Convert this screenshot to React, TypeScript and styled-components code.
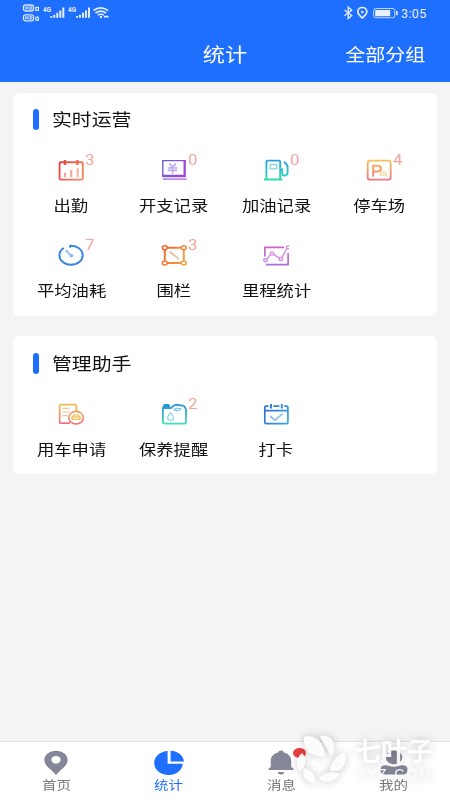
import React from 'react';
import styled, { createGlobalStyle } from 'styled-components';

const GlobalStyle = createGlobalStyle`
  * { box-sizing: border-box; }
  body { margin: 0; background: #f4f4f4; font-family: Roboto, 'Noto Sans CJK SC', sans-serif; }
  svg { display: block; overflow: visible; }
`;

const Screen = styled.div`
  position: relative;
  width: 450px;
  height: 800px;
  display: flex;
  flex-direction: column;
  background: #f4f4f4;
  overflow: hidden;
`;

const Top = styled.header`
  height: 82px;
  background: #1f6fff;
  color: #fff;
`;

const StatusBar = styled.div`
  height: 27px;
  display: flex;
  justify-content: space-between;
  padding: 0 23px 0 22px;
`;

const StatusRight = styled.div`
  display: flex;
`;

const Clock = styled.span`
  width: 26px;
  font-size: 12.5px;
  line-height: 27px;
  letter-spacing: 0.4px;
  color: #e4eeff;
`;

const TitleBar = styled.div`
  height: 54px;
  display: grid;
  grid-template-columns: 105px 240px 80px;
  justify-content: start;
  align-items: center;
  text-align: center;
`;

const Wide = styled.span<{ $size: number; $color?: string; $origin?: string }>`
  display: inline-block;
  white-space: nowrap;
  font-family: 'Noto Sans CJK SC', sans-serif;
  font-size: ${(p) => p.$size}px;
  line-height: 24px;
  color: ${(p) => p.$color ?? '#111'};
  transform: scaleX(1.169);
  transform-origin: ${(p) => p.$origin ?? 'center'};
`;

const Action = styled.div`
  display: flex;
  justify-content: center;
`;

const Main = styled.main`
  flex: 1;
  display: flex;
  flex-direction: column;
  gap: 20px;
  padding: 11px 13px 0;
`;

const Card = styled.section<{ $height: number; $head: number }>`
  height: ${(p) => p.$height}px;
  display: grid;
  grid-template-rows: ${(p) => p.$head}px 1fr;
  background: #fff;
  border-radius: 6px;
  padding: 0 7px;
`;

const CardHead = styled.div`
  padding-left: 13px;
  display: flex;
  align-items: center;
  gap: 13px;
`;

const Mark = styled.i`
  width: 6px;
  height: 21px;
  border-radius: 3px;
  background: #1f6fff;
`;

const Grid = styled.div<{ $top: number }>`
  display: grid;
  grid-template-columns: repeat(4, 102.5px);
  grid-auto-rows: 85px;
  padding-top: ${(p) => p.$top}px;
`;

const Cell = styled.div`
  display: flex;
  flex-direction: column;
  align-items: center;
  gap: 9px;
`;

const IconWrap = styled.div`
  position: relative;
  width: 30px;
  height: 28px;
`;

const Count = styled.span`
  position: absolute;
  left: 29px;
  top: -5px;
  font-family: Roboto, sans-serif;
  font-weight: 400;
  font-size: 14.6px;
  line-height: 19px;
  color: #f5a49d;
  transform: scaleX(1.15);
  transform-origin: left;
`;

const TabBar = styled.nav`
  height: 58px;
  display: grid;
  grid-template-columns: repeat(4, 112.5px);
  background: #fff;
  box-shadow: 0 -1px 1px #e3e3e3;
`;

const Tab = styled.div`
  display: flex;
  flex-direction: column;
  align-items: center;
  padding-top: 6px;
`;

const TabIcon = styled.div`
  position: relative;
  height: 25px;
`;

const Dot = styled.i`
  position: absolute;
  left: 27px;
  top: 0;
  width: 13px;
  height: 10px;
  border-radius: 50%;
  background: #ee3f40;
`;

const Watermark = styled.div`
  position: absolute;
  left: 296px;
  top: 733px;
  width: 142px;
  height: 52px;
  display: flex;
  gap: 3px;
  color: rgba(255, 255, 255, 0.92);
  filter: drop-shadow(0 0 4px rgba(0, 0, 0, 0.24));
`;

const Brand = styled.div`
  display: flex;
  flex-direction: column;
  padding: 2px 0 0 5px;
  white-space: nowrap;
`;

const BrandName = styled.span`
  font: 700 26px/30px 'Noto Sans CJK SC', sans-serif;
`;

const BrandSite = styled.span`
  padding-left: 2px;
  font: 400 14px/18px 'Liberation Sans', sans-serif;
  letter-spacing: 1.9px;
`;

function Gradient({ id, from, to, flat }: { id: string; from: string; to: string; flat?: boolean }) {
  return (
    <linearGradient id={id} gradientUnits="userSpaceOnUse" x1="3" y1="4" x2={flat ? 27 : 3} y2={flat ? 20 : 24}>
      <stop stopColor={from} />
      <stop offset="1" stopColor={to} />
    </linearGradient>
  );
}

const Car = () => <path d="M1.3 2.4 2.1.7h4l.8 1.7M.6 2.5h7v2.3h-7zM1.4 5v.8M6.8 5v.8" />;

const art: Record<string, React.ReactNode> = {
  attendance: (
    <g stroke="url(#ga)">
      <Gradient id="ga" from="#e33f3d" to="#f58a62" flat />
      <rect x="3.6" y="6.3" width="23.2" height="17.3" rx="1" strokeWidth="1.9" />
      <path d="M9 4v5M21.4 4v5" strokeWidth="2.4" />
      <path d="M9 21.3v-4.6M15.2 21.3V14M21.7 21.3v-9" strokeWidth="2.2" opacity=".58" />
    </g>
  ),
  expense: (
    <g stroke="url(#ge)">
      <Gradient id="ge" from="#5f63dc" to="#a944d8" flat />
      <path d="M3.8 20V4.6H26" strokeWidth="1.4" />
      <path d="M25.7 4v16H3.2" strokeWidth="2.3" />
      <path d="M3.8 23.1h23.8" strokeWidth="1.7" opacity=".65" />
      <path d="m10.2 7.4 3.4 4 3.4-4M8.8 12h9.6M8.8 14.4h9.6M13.6 11.4v6" strokeWidth="1.7" opacity=".5" />
    </g>
  ),
  fuel: (
    <g stroke="url(#gf)">
      <Gradient id="gf" from="#2a9fe0" to="#31dfad" />
      <path d="M5.4 23V5.8q0-1.2 1.2-1.2h11.2q1.4 0 1.4 1.2V23M3 23.5h18.5" strokeWidth="1.9" />
      <rect x="9.2" y="8.5" width="6.5" height="4.3" strokeWidth="1.3" opacity=".6" />
      <path d="M19.5 13.5h1.7v4q0 2 2 2 3.4 0 3.4-3V11q0-2.4-3.6-5.3" strokeWidth="1.9" />
    </g>
  ),
  parking: (
    <g stroke="url(#gp)">
      <Gradient id="gp" from="#f4c45a" to="#f17783" />
      <rect x="3.7" y="4.7" width="23" height="19" rx="2.5" strokeWidth="1.8" />
      <path d="M9.2 20.6V9.8h4.3q3.5 0 3.5 2.8t-3.5 2.9H9.2" strokeWidth="2" />
      <g transform="translate(15.6 15) scale(.9)" strokeWidth="1" opacity=".7"><Car /></g>
    </g>
  ),
  gauge: (
    <g stroke="#3183e5">
      <path d="M14.2 6.8V4.8C21 4.3 26.7 8.5 26.7 14.2c0 5.3-5.2 9.6-11.7 9.6S3.4 19.5 3.4 14.2C3.4 11.2 4.8 8.7 7.9 7" strokeWidth="1.9" />
      <path d="m9.8 9.3 4.6 4.6" strokeWidth="2" opacity=".5" />
      <ellipse cx="15.5" cy="14.7" rx="2" ry="1.7" fill="#91bbf0" stroke="none" />
    </g>
  ),
  fence: (
    <g stroke="url(#gn)">
      <Gradient id="gn" from="#ed6029" to="#f3a044" flat />
      <path d="M8.3 6.7h14M8.3 22h14M5.8 9v10.7M24.8 9v10.7" strokeWidth="1.9" />
      {[[5.8, 6.7], [24.8, 6.7], [5.8, 22], [24.8, 22]].map(([x, y]) => (
        <ellipse key={`${x}-${y}`} cx={x} cy={y} rx="2.4" ry="2" strokeWidth="1.6" />
      ))}
      <path d="m10.5 10.7 9.3 7.2" strokeWidth="1.6" opacity=".6" />
    </g>
  ),
  mileage: (
    <g stroke="url(#gm)">
      <Gradient id="gm" from="#d765c9" to="#b46be0" />
      <path d="M3.9 15.5V6.4H23M27.1 12v11.7H5" strokeWidth="1.7" />
      <g strokeWidth="1.4" opacity=".75">
        <path d="m5.8 17.8 3.8-4.2M12.5 13.3l6 3.8M21 16.3l4.5-8" />
        <ellipse cx="4.5" cy="19.2" rx="1.8" ry="1.5" />
        <ellipse cx="11" cy="12.4" rx="1.8" ry="1.5" />
        <ellipse cx="19.9" cy="18" rx="1.8" ry="1.5" />
        <path d="M28 5.2q-2.7-.6-2.7 1.2 0 1.9 2.7 1.2" />
      </g>
    </g>
  ),
  apply: (
    <g stroke="url(#gy)">
      <Gradient id="gy" from="#f2c052" to="#f06f7c" />
      <path d="M20.4 11V5.6q0-1-1-1H4.7q-1 0-1 1v16.6q0 1 1 1H14" strokeWidth="1.7" />
      <path d="M6.3 8.4h7.5M6.3 12h8M6.3 15.6h5" strokeWidth="1.2" opacity=".65" />
      <ellipse cx="20.1" cy="17.7" rx="7.3" ry="6.3" strokeWidth="1.6" />
      <g transform="translate(15.4 14.3) scale(1.15 1)" strokeWidth="1.2"><Car /></g>
    </g>
  ),
  can: (
    <g stroke="url(#gc)">
      <Gradient id="gc" from="#2492dc" to="#43dfbc" />
      <path d="M4.5 7.8V5.5q0-1 1-1h4q1 0 1 1v1.8z" fill="#2196d9" strokeWidth="1" />
      <path d="M3.9 8h8l3.2-2.6q1-.6 3.4-.4l5.2.6q1.2.2 2 1.3l1.3 2.4v12.4q0 2-2 2H5.9q-2 0-2-2z" strokeWidth="1.8" />
      <path d="M14.8 9.7q2.5-2 4-1.5l3 .7-1 1.3q-3.3.8-6-.5zM11.5 13q-3 3.4-3 5t3 2.2 3-2.2-3-5z" strokeWidth="1.3" opacity=".6" />
    </g>
  ),
  check: (
    <g stroke="url(#gk)">
      <Gradient id="gk" from="#3568cf" to="#36a4e9" flat />
      <path d="M7.5 6.2H5q-1.2 0-1.2 1.2v15.1q0 1.2 1.2 1.2h20.6q1.3 0 1.3-1.2V7.4q0-1.2-1.3-1.2h-2.4M12.4 6.2h6M3.8 10.7H27" strokeWidth="1.7" />
      <path d="M10 4v4.5M20.8 4v4.5" strokeWidth="1.9" />
      <path d="m9.2 16.2 4.8 4 7.7-6.5" strokeWidth="1.6" opacity=".58" />
    </g>
  ),
};

type Entry = { icon: string; label: string; count?: number };

const operations: Entry[] = [
  { icon: 'attendance', label: '出勤', count: 3 },
  { icon: 'expense', label: '开支记录', count: 0 },
  { icon: 'fuel', label: '加油记录', count: 0 },
  { icon: 'parking', label: '停车场', count: 4 },
  { icon: 'gauge', label: '平均油耗', count: 7 },
  { icon: 'fence', label: '围栏', count: 3 },
  { icon: 'mileage', label: '里程统计' },
];

const helpers: Entry[] = [
  { icon: 'apply', label: '用车申请' },
  { icon: 'can', label: '保养提醒', count: 2 },
  { icon: 'check', label: '打卡' },
];

type PanelProps = { title: string; items: Entry[]; height: number; head: number; top: number };

function Panel({ title, items, height, head, top }: PanelProps) {
  return (
    <Card $height={height} $head={head}>
      <CardHead>
        <Mark />
        <Wide $size={17} $origin="left">{title}</Wide>
      </CardHead>
      <Grid $top={top}>
        {items.map((item) => (
          <Cell key={item.label}>
            <IconWrap>
              <svg width="30" height="28" viewBox="0 0 30 28" fill="none">{art[item.icon]}</svg>
              {item.count !== undefined && <Count>{item.count}</Count>}
            </IconWrap>
            <Wide $size={14.8}>{item.label}</Wide>
          </Cell>
        ))}
      </Grid>
    </Card>
  );
}

const Bars = ({ x }: { x: number }) => (
  <path d={`M${x} 17.7v-1.6M${x + 3} 17.7v-3M${x + 6} 17.7v-5M${x + 9} 17.7v-7.3M${x + 12} 17.7V7.4`} stroke="#e4eeff" strokeWidth="2" />
);

const SignalIcons = () => (
  <svg width="90" height="27" viewBox="0 0 90 27" fill="none">
    {[5, 14.8].map((y) => (
      <g key={y} stroke="#d8e6ff">
        <rect x="1.5" y={y} width="10" height="6" rx="2" strokeWidth="1.3" />
        <path d={`M3.8 ${y + 1.3}v3.4M6 ${y + 1.3}v3.4M3.8 ${y + 3}H6M8 ${y + 1.5}v3q2 0 2-1.5t-2-1.5z`} strokeWidth="1" />
        <rect x="13.8" y={y + 2.4} width="2.6" height="3" strokeWidth="1.2" />
      </g>
    ))}
    <g fill="#e4eeff" fontFamily="Roboto" fontSize="6.4" fontWeight="700">
      <text x="21" y="12">4G</text>
      <text x="46" y="12">4G</text>
    </g>
    <Bars x={29.3} />
    <Bars x={55} />
    <g stroke="#e4eeff" strokeWidth="1.6">
      <path d="M71.5 10.5q7-5.2 14.5 0M73.5 13q5.3-3.7 10.5 0M75.8 15.2q3-2 6 0" />
      <path d="M78 17h2M82 16.7h4.5" strokeWidth="1.8" />
    </g>
  </svg>
);

const DeviceIcons = () => (
  <svg width="59" height="27" viewBox="342 0 59 27" fill="none" stroke="#e4eeff">
    <path d="m344.5 10 7.2 5.5-3.5 3V7.2l3.5 3-7.2 5.6" strokeWidth="1.3" />
    <path d="M362.3 18c-2.2-2.1-4.5-3.8-4.5-6.2 0-2.6 2-4.3 4.5-4.3s4.5 1.7 4.5 4.3c0 2.4-2.3 4.1-4.5 6.2z" strokeWidth="1.7" />
    <circle cx="362.3" cy="12" r="1.3" fill="#e4eeff" stroke="none" />
    <rect x="373.7" y="8.5" width="21" height="9.2" rx="1.8" strokeWidth="1" opacity=".8" />
    <path d="M375.2 10h15v6.2h-15z" fill="#e8f0ff" stroke="none" />
    <path d="M396.8 11v4.2" strokeWidth="1.7" />
  </svg>
);

const tabs = [
  {
    label: '首页',
    icon: <path fillRule="evenodd" d="M15 2.8c6.5 0 11.7 4 11.7 9.3 0 4.2-3.7 7.2-7.4 10.4L15 27l-4.3-4.5C7 19.3 3.3 16.3 3.3 12.1 3.3 6.8 8.5 2.8 15 2.8zm0 5.2c-2.6 0-4.6 1.7-4.6 3.8s2 3.8 4.6 3.8 4.6-1.7 4.6-3.8S17.6 8 15 8z" />,
  },
  {
    label: '统计',
    active: true,
    icon: <path d="M13.6 3v12.7h15.1C28.2 22.3 22.3 27 14.7 27 6.4 27 .2 21.8.2 15.1.2 8.5 6 3.4 13.6 3zm3-.2C24 3 29.4 7.5 30 13.5H16.6z" />,
  },
  {
    label: '消息',
    dot: true,
    icon: <path d="M15 2.5c1.6 0 2.6.8 2.8 2 4.6 1 7.4 4 7.4 8.3V19l2.2 1.5V22H2.6v-1.5L4.8 19v-6.2c0-4.3 2.8-7.3 7.4-8.3.2-1.2 1.2-2 2.8-2zM11.7 24h6.6c-.3 1.7-1.5 2.5-3.3 2.5s-3-.8-3.3-2.5z" />,
  },
  {
    label: '我的',
    icon: <path d="M15 2.5c4.8 0 8.1 2.8 8.1 6.8s-3.3 6.9-8.1 6.9-8.1-2.9-8.1-6.9 3.3-6.8 8.1-6.8zM6.5 17.3q2.2 0 4 .7 4.5 1.4 9 0 1.8-.7 4-.7 5 0 5 4.4v.6q0 4.3-5.2 4.3H6.7q-5.2 0-5.2-4.3v-.6q0-4.4 5-4.4z" />,
  },
];

export default function App() {
  return (
    <Screen>
      <GlobalStyle />
      <Top>
        <StatusBar>
          <SignalIcons />
          <StatusRight>
            <DeviceIcons />
            <Clock>3:05</Clock>
          </StatusRight>
        </StatusBar>
        <TitleBar>
          <span />
          <div><Wide $size={19} $color="#fff">统计</Wide></div>
          <Action><Wide $size={17.1} $color="#fff">全部分组</Wide></Action>
        </TitleBar>
      </Top>
      <Main>
        <Panel title="实时运营" items={operations} height={223} head={52} top={11} />
        <Panel title="管理助手" items={helpers} height={138} head={54} top={10} />
      </Main>
      <TabBar>
        {tabs.map((tab) => (
          <Tab key={tab.label}>
            <TabIcon>
              <svg width="30" height="30" viewBox="0 0 30 30" fill={tab.active ? '#1f6fff' : '#858798'}>{tab.icon}</svg>
              {tab.dot && <Dot />}
            </TabIcon>
            <Wide $size={12.4} $color={tab.active ? '#1f6fff' : '#777'}>{tab.label}</Wide>
          </Tab>
        ))}
      </TabBar>
      <Watermark>
        <svg width="51" height="52" viewBox="0 0 51 52" fill="currentColor">
          <path d="M8 4C17 1 28 7 29 23 16 25 7 18 8 4z" />
          <path d="M24 3c13-2 18 10 11 20-3-8-8-12-11-20z" />
          <path d="M48 19c5 12-3 21-14 19 1-9 6-15 14-19z" />
          <path d="M44 41c-6 9-17 10-21 4 7-6 13-8 21-4z" />
          <path d="M19 50C10 50 5 43 8 35c8 2 12 7 11 15z" />
          <path d="M6 20c5 5 4 14-2 18-5-6-4-13 2-18z" />
        </svg>
        <Brand>
          <BrandName>七叶子</BrandName>
          <BrandSite>7YZ.COM</BrandSite>
        </Brand>
      </Watermark>
    </Screen>
  );
}
